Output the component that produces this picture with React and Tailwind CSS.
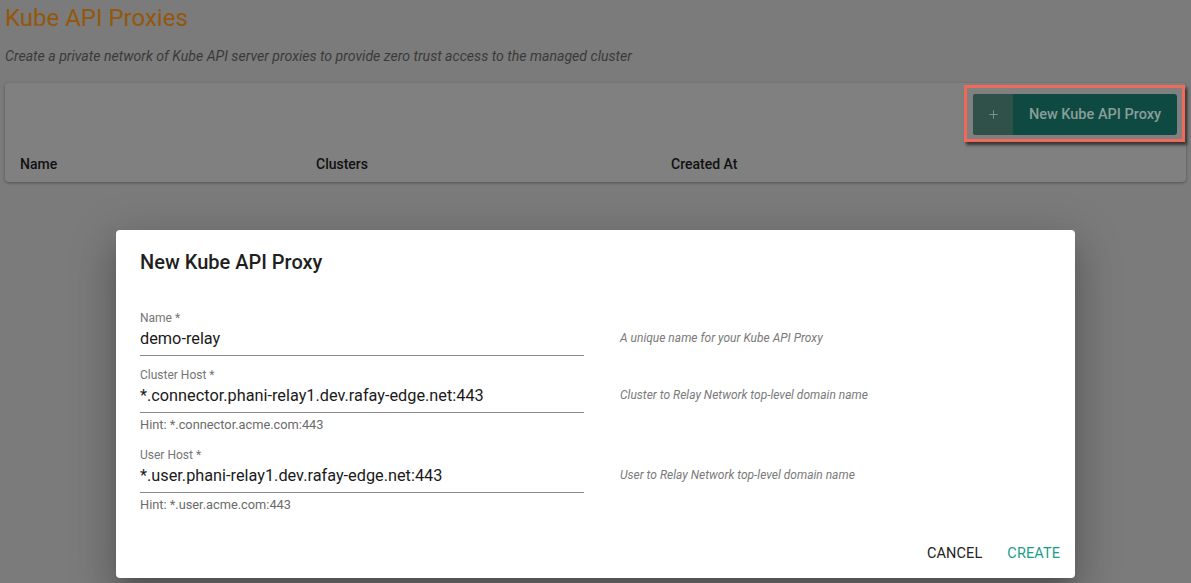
import { Plus } from "lucide-react";

function Field({ label, value, hint, help }) {
    return (
        <div className="flex items-start">
            <div className="w-[444px] shrink-0">
                <label className="block text-[12px] leading-[16px] text-[#757575]">{label}</label>
                <div className="pt-[1px] text-[16.3px] leading-[24px] text-[#1a1a1a] pb-[4px] border-b border-[#8a8a8a]">
                    {value}
                </div>
                {hint && (
                    <p className="mt-[4px] text-[12.8px] leading-[16px] text-[#6b6b6b]">{hint}</p>
                )}
            </div>
            <p className="ml-9 pt-[20px] text-[12px] leading-[16px] italic text-[#7a7a7a]">{help}</p>
        </div>
    );
}

export default function App() {
    return (
        <div
            className="relative h-[583px] w-full overflow-hidden bg-[#7b7b7b]"
            style={{ fontFamily: "Roboto, 'Liberation Sans', sans-serif" }}
        >
            {/* Page header */}
            <div className="px-[5px] pt-[4px]">
                <h1 className="text-[24px] leading-[28px] text-[#94570c]">Kube API Proxies</h1>
                <p className="mt-[15px] text-[14.1px] leading-[18px] italic text-[#3a3a3a]">
                    Create a private network of Kube API server proxies to provide zero trust access to the managed cluster
                </p>
            </div>

            {/* Table card */}
            <div className="mx-[5px] mt-[18px] h-[99px] rounded bg-[#808080] shadow-[0_1px_3px_rgba(0,0,0,0.35)] flex flex-col">
                <div className="flex justify-end pt-[2px] pr-[1px]">
                    <div className="border-[3px] border-[#ef6a58] pt-[6px] pl-[6px] pr-[5px] pb-[4px] shadow-[2px_3px_3px_rgba(0,0,0,0.6)]">
                        <button className="flex h-[41px] w-[204px] overflow-hidden rounded-[3px] bg-[#0e4a42] text-[#8a9e99]">
                            <span className="flex w-[40px] items-center justify-center bg-[#30504a]">
                                <Plus size={13} strokeWidth={1.5} />
                            </span>
                            <span className="flex flex-1 items-center justify-center text-[14.5px] font-medium">
                                New Kube API Proxy
                            </span>
                        </button>
                    </div>
                </div>
                <div className="flex items-center px-[15px] mt-[12px] text-[14px] font-medium text-[#111111]">
                    <span className="w-[296px]">Name</span>
                    <span className="w-[355px]">Clusters</span>
                    <span>Created At</span>
                </div>
            </div>

            {/* Dialog */}
            <div className="absolute left-[116px] top-[230px] flex h-[348px] w-[959px] flex-col rounded bg-white shadow-[0_11px_15px_-7px_rgba(0,0,0,0.2),0_24px_38px_3px_rgba(0,0,0,0.14),0_9px_46px_8px_rgba(0,0,0,0.12)]">
                <h2 className="px-6 pt-4 text-[20px] leading-[32px] font-medium text-[#1f1f1f]">New Kube API Proxy</h2>

                <div className="px-6 mt-[32px]">
                    <Field
                        label="Name *"
                        value="demo-relay"
                        help="A unique name for your Kube API Proxy"
                    />
                    <div className="mt-[11px]">
                        <Field
                            label="Cluster Host *"
                            value="*.connector.phani-relay1.dev.rafay-edge.net:443"
                            hint="Hint: *.connector.acme.com:443"
                            help="Cluster to Relay Network top-level domain name"
                        />
                    </div>
                    <div className="mt-[14px]">
                        <Field
                            label="User Host *"
                            value="*.user.phani-relay1.dev.rafay-edge.net:443"
                            hint="Hint: *.user.acme.com:443"
                            help="User to Relay Network top-level domain name"
                        />
                    </div>
                </div>

                <div className="mt-auto flex justify-end gap-[9px] p-[7px] pt-[8px] pb-[6px]">
                    <button className="h-[36px] px-2 text-[14.5px] uppercase tracking-[0.1px] text-[#222222]">
                        Cancel
                    </button>
                    <button className="h-[36px] px-2 text-[14.5px] uppercase tracking-[0.1px] text-[#1a9e8c]">
                        Create
                    </button>
                </div>
            </div>
        </div>
    );
}
